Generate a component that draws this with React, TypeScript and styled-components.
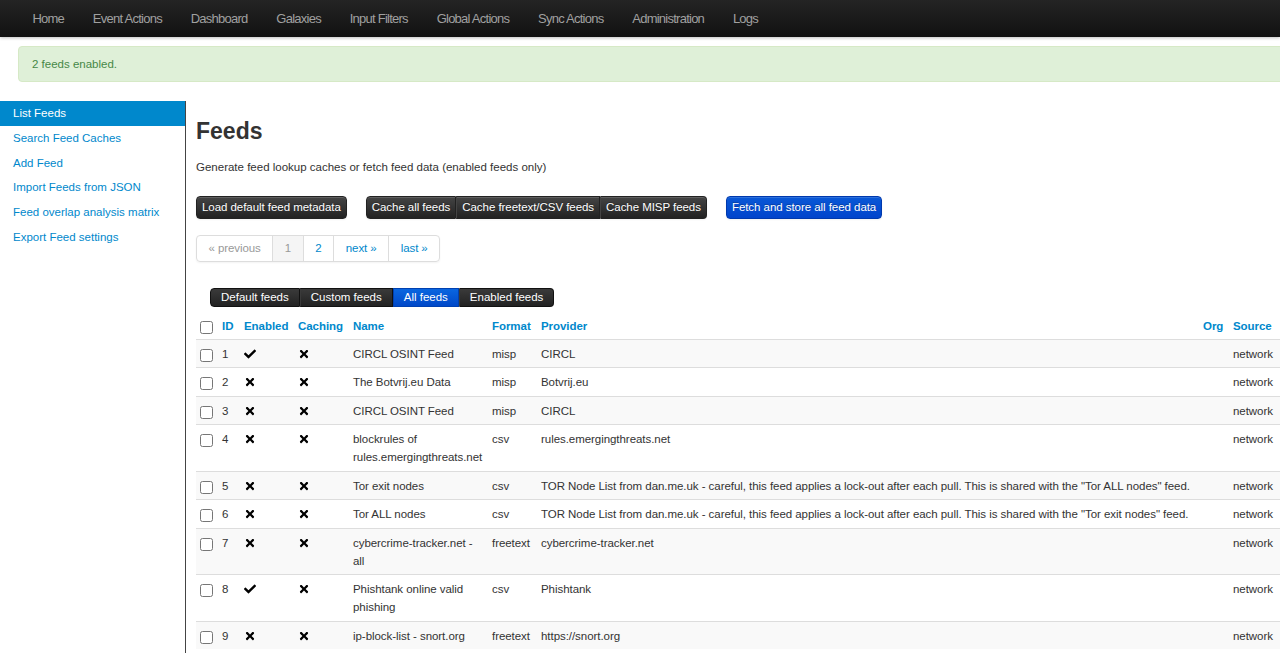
import React from 'react';
import styled, { createGlobalStyle, css } from 'styled-components';
import { FaCheck, FaTimes } from 'react-icons/fa';

const GlobalStyle = createGlobalStyle`
    html, body {
        margin: 0;
        padding: 0;
        background: #fff;
        overflow: hidden;
    }
    body {
        font-family: "Liberation Sans", Arial, sans-serif;
        font-size: 11.5px;
        line-height: 18px;
        color: #333;
    }
`;

const Page = styled.div`
    width: 1280px;
    min-height: 653px;
    display: flex;
    flex-direction: column;
`;

const NavBar = styled.div`
    height: 37px;
    background: linear-gradient(to bottom, #242424, #111);
    display: flex;
    align-items: center;
    padding-left: 18px;
    box-shadow: 0 1px 3px rgba(0, 0, 0, 0.25);
`;

const NavItem = styled.a`
    font-family: "Liberation Sans", Arial, sans-serif;
    font-size: 13px;
    letter-spacing: -0.75px;
    color: #a0a0a0;
    padding: 0 14.4px;
    text-decoration: none;
    line-height: 37px;
`;

const Alert = styled.div`
    margin: 9px -20px 0 18px;
    height: 34px;
    padding-left: 13px;
    display: flex;
    align-items: center;
    background: #dff0d8;
    border: 1px solid #d6e9c6;
    border-radius: 4px;
    color: #468847;
`;

const Body = styled.div`
    display: flex;
    margin-top: 19px;
    flex: 1;
`;

const SideBar = styled.ul`
    width: 185px;
    margin: 0;
    padding: 0;
    list-style: none;
    border-right: 1px solid #444;
    min-height: 560px;
`;

const SideItem = styled.li<{ $active?: boolean }>`
    padding: 3px 13px;
    line-height: 18.8px;
    color: #0088cc;
    ${(p) => p.$active && css`
        background: #0088cc;
        color: #fff;
    `}
`;

const Main = styled.div`
    padding-left: 10px;
    flex: 1;
`;

const Title = styled.h2`
    margin: 10px 0 7px;
    font-size: 23px;
    line-height: 40px;
    font-weight: bold;
    color: #333;
`;

const Desc = styled.p`
    margin: 0 0 20px;
`;

const ButtonRow = styled.div`
    display: flex;
    gap: 19px;
`;

const Group = styled.div`
    display: flex;
`;

const Btn = styled.button<{ $primary?: boolean; $first?: boolean; $last?: boolean; $grouped?: boolean }>`
    font-family: "Liberation Sans", Arial, sans-serif;
    font-size: 11.5px;
    letter-spacing: -0.05px;
    line-height: 17px;
    height: 23px;
    padding: 2px 5px;
    color: #fff;
    background: linear-gradient(to bottom, #444, #222);
    border: 1px solid #222;
    border-radius: 4px;
    text-shadow: 0 -1px 0 rgba(0, 0, 0, 0.25);
    box-shadow: inset 0 1px 0 rgba(255, 255, 255, 0.15), 0 1px 2px rgba(0, 0, 0, 0.05);
    ${(p) => p.$primary && css`
        background: linear-gradient(to bottom, #0a58d6, #0044cc);
        border-color: #0039ad;
    `}
    ${(p) => p.$grouped && css`
        border-radius: 0;
        border-left-color: #444;
        ${p.$first && css`border-radius: 4px 0 0 4px; border-left-color: #222;`}
        ${p.$last && css`border-radius: 0 4px 4px 0;`}
    `}
`;

const Pager = styled.ul`
    display: inline-flex;
    margin: 16px 0 0;
    padding: 0;
    list-style: none;
    border: 1px solid #ddd;
    border-radius: 4px;
    box-shadow: 0 1px 2px rgba(0, 0, 0, 0.05);
`;

const PageItem = styled.li<{ $state?: 'disabled' | 'active' }>`
    padding: 4px 11.6px;
    line-height: 17px;
    letter-spacing: -0.1px;
    color: #0088cc;
    border-left: 1px solid #ddd;
    &:first-child { border-left: none; }
    ${(p) => p.$state === 'disabled' && css`color: #999;`}
    ${(p) => p.$state === 'active' && css`color: #999; background: #f5f5f5;`}
`;

const FilterGroup = styled.div`
    display: flex;
    margin: 26px 0 5px 14px;
`;

const FilterBtn = styled.span<{ $active?: boolean }>`
    font-size: 11.5px;
    line-height: 17px;
    height: 17px;
    padding: 0 10px;
    color: #fff;
    background: linear-gradient(to bottom, #3a3a3a, #222);
    border: 1px solid #111;
    border-left: 1px solid #3a3a3a;
    &:first-child { border-radius: 4px 0 0 4px; border-left-color: #111; }
    &:last-child { border-radius: 0 4px 4px 0; }
    ${(p) => p.$active && css`
        background: linear-gradient(to bottom, #0a66e0, #0048c8);
        border-color: #0040b0;
    `}
`;

const Table = styled.table`
    width: 1084px;
    table-layout: fixed;
    border-collapse: collapse;
    border-spacing: 0;
    letter-spacing: -0.05px;
`;

const Th = styled.th<{ $right?: boolean }>`
    text-align: ${(p) => (p.$right ? 'right' : 'left')};
    padding: 5px 5px 4px;
    line-height: 18px;
    color: #0088cc;
    font-weight: bold;
    vertical-align: top;
`;

const Tr = styled.tr<{ $odd?: boolean }>`
    background: ${(p) => (p.$odd ? '#f9f9f9' : '#fff')};
    border-top: 1px solid #ddd;
`;

const Td = styled.td<{ $tight?: boolean; $nowrap?: boolean }>`
    padding: 5px ${(p) => (p.$tight ? '2px' : '5px')} 4.45px 5px;
    line-height: 18px;
    vertical-align: top;
    ${(p) => p.$nowrap && css`white-space: nowrap;`}
`;

const Check = styled.input`
    display: block;
    margin: 4px 0 1px -1px;
    width: 13px;
    height: 13px;
`;

const Icon = styled.span`
    display: flex;
    align-items: center;
    height: 18px;
    color: #000;
`;

interface Feed {
    id: number;
    enabled: boolean;
    name: string;
    format: string;
    provider: string;
}

const feeds: Feed[] = [
    { id: 1, enabled: true, name: 'CIRCL OSINT Feed', format: 'misp', provider: 'CIRCL' },
    { id: 2, enabled: false, name: 'The Botvrij.eu Data', format: 'misp', provider: 'Botvrij.eu' },
    { id: 3, enabled: false, name: 'CIRCL OSINT Feed', format: 'misp', provider: 'CIRCL' },
    { id: 4, enabled: false, name: 'blockrules of rules.emergingthreats.net', format: 'csv', provider: 'rules.emergingthreats.net' },
    { id: 5, enabled: false, name: 'Tor exit nodes', format: 'csv', provider: 'TOR Node List from dan.me.uk - careful, this feed applies a lock-out after each pull. This is shared with the "Tor ALL nodes" feed.' },
    { id: 6, enabled: false, name: 'Tor ALL nodes', format: 'csv', provider: 'TOR Node List from dan.me.uk - careful, this feed applies a lock-out after each pull. This is shared with the "Tor exit nodes" feed.' },
    { id: 7, enabled: false, name: 'cybercrime-tracker.net - all', format: 'freetext', provider: 'cybercrime-tracker.net' },
    { id: 8, enabled: true, name: 'Phishtank online valid phishing', format: 'csv', provider: 'Phishtank' },
    { id: 9, enabled: false, name: 'ip-block-list - snort.org', format: 'freetext', provider: 'https://snort.org' },
];

const navItems = ['Home', 'Event Actions', 'Dashboard', 'Galaxies', 'Input Filters', 'Global Actions', 'Sync Actions', 'Administration', 'Logs'];
const sideItems = ['List Feeds', 'Search Feed Caches', 'Add Feed', 'Import Feeds from JSON', 'Feed overlap analysis matrix', 'Export Feed settings'];
const colWidths = [21, 22, 54, 55, 139, 49, 662, 30, 52];

const Mark: React.FC<{ on: boolean }> = ({ on }) => (
    <Icon>{on ? <FaCheck size={12} /> : <FaTimes size={12} />}</Icon>
);

const App: React.FC = () => {
    return (
        <Page>
            <GlobalStyle />
            <NavBar>
                {navItems.map((item) => (
                    <NavItem key={item}>{item}</NavItem>
                ))}
            </NavBar>
            <Alert>2 feeds enabled.</Alert>
            <Body>
                <SideBar>
                    {sideItems.map((item, i) => (
                        <SideItem key={item} $active={i === 0}>{item}</SideItem>
                    ))}
                </SideBar>
                <Main>
                    <Title>Feeds</Title>
                    <Desc>Generate feed lookup caches or fetch feed data (enabled feeds only)</Desc>
                    <ButtonRow>
                        <Btn>Load default feed metadata</Btn>
                        <Group>
                            <Btn $grouped $first>Cache all feeds</Btn>
                            <Btn $grouped>Cache freetext/CSV feeds</Btn>
                            <Btn $grouped $last>Cache MISP feeds</Btn>
                        </Group>
                        <Btn $primary>Fetch and store all feed data</Btn>
                    </ButtonRow>
                    <Pager>
                        <PageItem $state="disabled">« previous</PageItem>
                        <PageItem $state="active">1</PageItem>
                        <PageItem>2</PageItem>
                        <PageItem>next »</PageItem>
                        <PageItem>last »</PageItem>
                    </Pager>
                    <FilterGroup>
                        <FilterBtn>Default feeds</FilterBtn>
                        <FilterBtn>Custom feeds</FilterBtn>
                        <FilterBtn $active>All feeds</FilterBtn>
                        <FilterBtn>Enabled feeds</FilterBtn>
                    </FilterGroup>
                    <Table>
                        <colgroup>
                            {colWidths.map((w, i) => (
                                <col key={i} style={{ width: w }} />
                            ))}
                        </colgroup>
                        <thead>
                            <tr>
                                <Th><Check type="checkbox" /></Th>
                                <Th>ID</Th>
                                <Th>Enabled</Th>
                                <Th>Caching</Th>
                                <Th>Name</Th>
                                <Th>Format</Th>
                                <Th>Provider</Th>
                                <Th $right>Org</Th>
                                <Th>Source</Th>
                            </tr>
                        </thead>
                        <tbody>
                            {feeds.map((feed, i) => (
                                <Tr key={feed.id} $odd={i % 2 === 0}>
                                    <Td><Check type="checkbox" /></Td>
                                    <Td>{feed.id}</Td>
                                    <Td><Mark on={feed.enabled} /></Td>
                                    <Td><Mark on={false} /></Td>
                                    <Td $tight>{feed.name}</Td>
                                    <Td>{feed.format}</Td>
                                    <Td $nowrap>{feed.provider}</Td>
                                    <Td></Td>
                                    <Td>network</Td>
                                </Tr>
                            ))}
                        </tbody>
                    </Table>
                </Main>
            </Body>
        </Page>
    );
};

export default App;
